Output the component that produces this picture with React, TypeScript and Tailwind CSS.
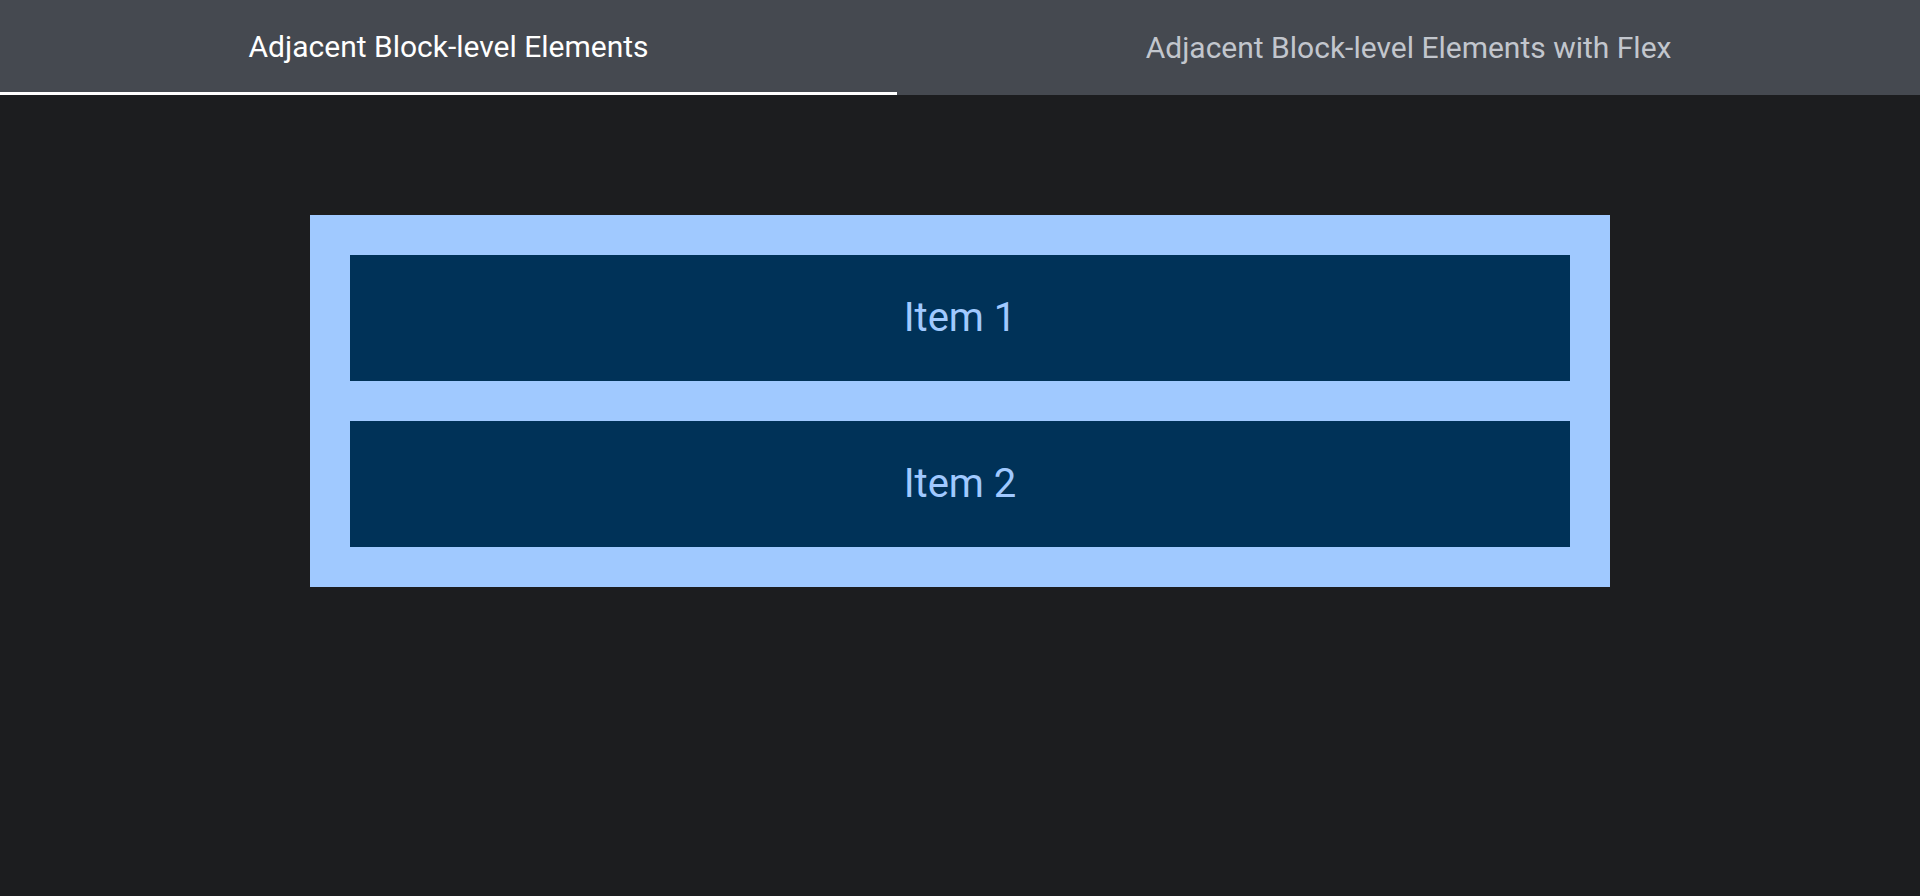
export default function App() {
  const tabs = [
    { label: 'Adjacent Block-level Elements', active: true },
    { label: 'Adjacent Block-level Elements with Flex', active: false },
  ]

  return (
    <div className="min-h-[896px] bg-[#1c1d1f] font-['Roboto',sans-serif]">
      <div className="flex h-[95px] bg-[#454950]">
        {tabs.map((tab) => (
          <div
            key={tab.label}
            className={`flex flex-auto items-center justify-center text-[30px] ${
              tab.active ? 'border-b-[3px] border-white text-white' : 'text-[#c2c6cd]'
            }`}
          >
            {tab.label}
          </div>
        ))}
      </div>

      <div className="flex justify-center pt-[120px]">
        <div className="flex w-[1300px] flex-col gap-10 bg-[#a0c9ff] p-10">
          {['Item 1', 'Item 2'].map((item) => (
            <div
              key={item}
              className="flex h-[126px] items-center justify-center bg-[#003258] text-[40px] text-[#a0c9ff]"
            >
              {item}
            </div>
          ))}
        </div>
      </div>
    </div>
  )
}
